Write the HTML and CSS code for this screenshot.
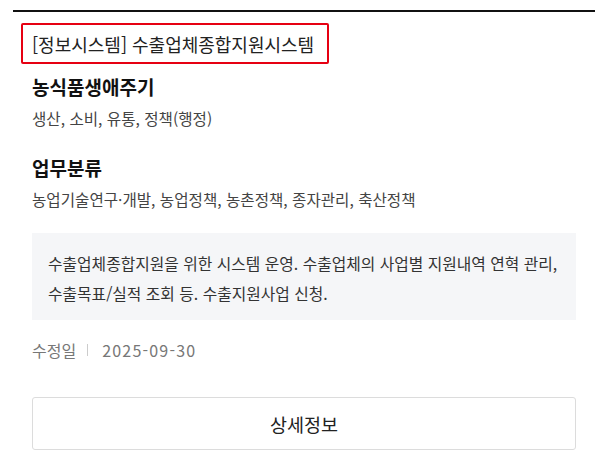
FILE: index.html
```html
<!DOCTYPE html>
<html lang="ko">
<head>
<meta charset="utf-8">
<link rel="stylesheet" href="styles.css">
</head>
<body>
<div class="card">
  <div class="title-box"><span class="title">[정보시스템] 수출업체종합지원시스템</span></div>
  <div class="body">
    <h3 class="label">농식품생애주기</h3>
    <p class="value">생산, 소비, 유통, 정책(행정)</p>
    <h3 class="label label-second">업무분류</h3>
    <p class="value">농업기술연구·개발, 농업정책, 농촌정책, 종자관리, 축산정책</p>
    <div class="desc">수출업체종합지원을 위한 시스템 운영. 수출업체의 사업별 지원내역 연혁 관리,<br>수출목표/실적 조회 등. 수출지원사업 신청.</div>
    <div class="meta"><span class="meta-key">수정일</span><span class="sep"></span><span class="meta-val">2025-09-30</span></div>
    <button class="detail-btn" type="button">상세정보</button>
  </div>
</div>
</body>
</html>
```
FILE: styles.css
```css
* { box-sizing: border-box; }
html, body { margin: 0; padding: 0; background: #fff; }
body {
  font-family: "Noto Sans CJK KR", "Noto Sans", sans-serif;
  color: #222;
}
.card {
  margin: 10px 0 0 13px;
  width: 582px;
  border-top: 2px solid #111;
}
.title-box {
  margin: 11px 0 0 8px;
  width: 308px;
  height: 41px;
  border: 2px solid #e60012;
  border-radius: 2px;
  display: flex;
  align-items: center;
  padding-left: 9px;
}
.title {
  font-size: 18px;
  color: #222;
  white-space: nowrap;
}
.body {
  padding: 0 19px;
}
.label {
  margin: 12px 0 0;
  font-size: 19px;
  line-height: 22px;
  font-weight: 700;
  color: #111;
}
.label-second { margin-top: 29px; }
.value {
  margin: 10px 0 0;
  font-size: 15.6px;
  line-height: 20px;
  color: #444;
}
.desc {
  margin-top: 24px;
  background: #f5f6f8;
  padding: 16px 16px 11px;
  font-size: 15.8px;
  line-height: 30px;
  color: #333;
}
.meta {
  margin-top: 20px;
  display: flex;
  align-items: center;
  font-size: 16px;
  line-height: 20px;
  color: #777;
}
.sep {
  width: 1px;
  height: 12px;
  background: #ccc;
  margin: 0 14px 0 11px;
}
.meta-val { letter-spacing: 1.2px; }
.detail-btn {
  display: block;
  margin-top: 37px;
  width: 100%;
  height: 53px;
  border: 1px solid #dcdcdc;
  border-radius: 3px;
  background: #fff;
  font-family: inherit;
  font-size: 18.5px;
  color: #222;
  cursor: pointer;
}
```
